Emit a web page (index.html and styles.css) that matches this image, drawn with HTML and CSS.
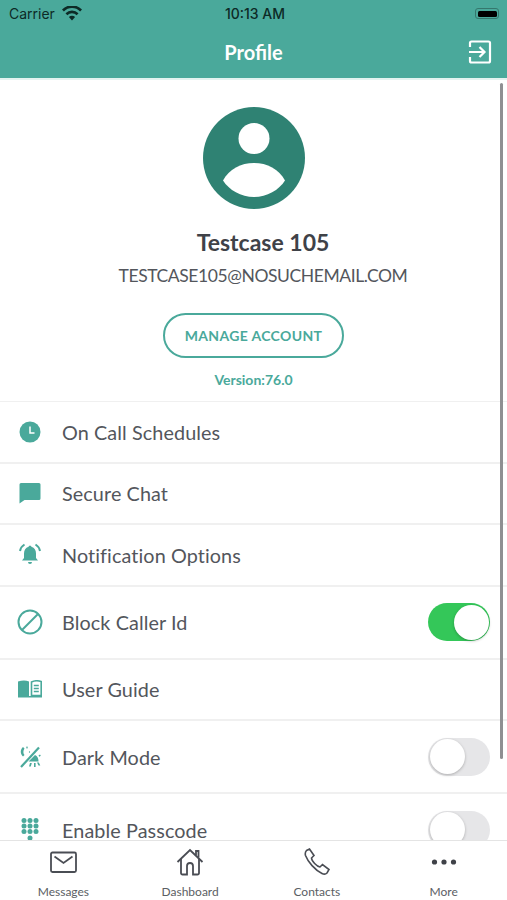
FILE: index.html
```html
<!DOCTYPE html>
<html lang="en">
<head>
    <meta charset="UTF-8">
    <meta name="viewport" content="width=device-width, initial-scale=1.0">
    <title>Profile</title>
    <link rel="stylesheet" href="styles.css">
</head>
<body>
    <div class="app">
        <header class="top">
            <div class="status-bar">
                <div class="carrier">
                    <span>Carrier</span>
                    <svg width="20" height="15" viewBox="0 0 20 15"><path d="M10 14.5 6.9 11a4.4 4.4 0 0 1 6.2 0zM5.3 9.3 3.5 7.3a9.200 9.200 0 0 1 13 0l-1.800 2a6.700 6.700 0 0 0-9.400 0zM1.900 5.500 0 3.500a14 14 0 0 1 20 0l-1.900 2a11.400 11.400 0 0 0-16.200 0z" fill="#0d2a26"/></svg>
                </div>
                <div class="clock">10:13 AM</div>
                <div class="battery"><span class="battery-fill"></span></div>
            </div>
            <div class="nav-bar">
                <h1>Profile</h1>
                <svg class="logout" width="24" height="24" viewBox="0 0 24 24" fill="none" stroke="#fff" stroke-width="2.2"><path d="M2 7V3a1.500 1.500 0 0 1 1.500-1.500h17A1.500 1.500 0 0 1 22 3v18a1.500 1.500 0 0 1-1.500 1.500h-17A1.500 1.500 0 0 1 2 21v-4"/><path d="M1 12h15M11.500 7l5 5-5 5"/></svg>
            </div>
        </header>

        <main class="content">
            <section class="profile">
                <svg class="avatar" width="102" height="102" viewBox="0 0 102 102"><circle cx="51" cy="51" r="51" fill="#2f8273"/><circle cx="51" cy="31.5" r="15.5" fill="#fff"/><path d="M20 73.500C26 62 38 56 51 56s25 6 31 17.500C76 83 64 90 51 90s-25-7-31-16.500z" fill="#fff"/></svg>
                <div class="name">Testcase 105</div>
                <div class="email">TESTCASE105@NOSUCHEMAIL.COM</div>
                <button class="btn-manage">MANAGE ACCOUNT</button>
                <div class="version">Version:76.0</div>
            </section>

            <ul class="menu">
                <li class="menu-item">
                    <div class="menu-icon"><svg width="22" height="22" viewBox="0 0 22 22"><circle cx="11" cy="11" r="10.500" fill="#4aa99b"/><path d="M11 5.500V12h4.500" fill="none" stroke="#fff" stroke-width="1.500"/></svg></div>
                    <span>On Call Schedules</span>
                </li>
                <li class="menu-item">
                    <div class="menu-icon"><svg width="22" height="22" viewBox="0 0 22 22"><path d="M2 1h18a1.500 1.500 0 0 1 1.500 1.500v14a1.500 1.500 0 0 1-1.500 1.500H5.500L.5 21.500V2.500A1.500 1.500 0 0 1 2 1z" fill="#4aa99b"/></svg></div>
                    <span>Secure Chat</span>
                </li>
                <li class="menu-item">
                    <div class="menu-icon"><svg width="24" height="24" viewBox="0 0 24 24"><path d="M12 2.500a2 2 0 0 1 1.500 1.300c3 1 4.500 3.700 4.500 6.700v4.500l2 2.500H4l2-2.500v-4.500c0-3 1.500-5.700 4.500-6.700A2 2 0 0 1 12 2.500zM10 19h4a2 2 0 0 1-4 0z" fill="#4aa99b"/><path d="M6.500 1.500C4 3 2.500 5 2 8M17.500 1.500C20 3 21.500 5 22 8" fill="none" stroke="#4aa99b" stroke-width="2"/></svg></div>
                    <span>Notification Options</span>
                </li>
                <li class="menu-item tall">
                    <div class="menu-icon"><svg width="26" height="26" viewBox="0 0 26 26" fill="none" stroke="#4aa99b" stroke-width="2"><circle cx="13" cy="13" r="11.500"/><path d="M5 21 21 5"/></svg></div>
                    <span>Block Caller Id</span>
                    <div class="switch on"><span class="knob"></span></div>
                </li>
                <li class="menu-item">
                    <div class="menu-icon"><svg width="24" height="18" viewBox="0 0 24 18"><path d="M0 1.500C4 0 8 0 11 1.500v14.500H0z" fill="#4aa99b"/><path d="M0 16h24v1.500H0z" fill="#4aa99b"/><path d="M13.500 2c3-1.500 6.500-1.500 9.700-.5v14H13.500z" fill="none" stroke="#4aa99b" stroke-width="1.600"/><path d="M15.800 5.500h5M15.800 8.500h5M15.800 11.500h5" stroke="#4aa99b" stroke-width="1.300"/></svg></div>
                    <span>User Guide</span>
                </li>
                <li class="menu-item tall">
                    <div class="menu-icon"><svg width="22" height="22" viewBox="0 0 22 22"><path d="M4 1C1 3.500 1 8 4 10.500L5.500 9C4 7.500 4 4.500 5.500 2.500zM8 0l.8 1.500L8 3l-.8-1.500zM10.500 5l.7 1-.7 1-.7-1z" fill="#4aa99b"/><path d="M20 1.500 2 21" stroke="#4aa99b" stroke-width="2.200"/><path d="M16 9c2.500 1 3.500 3.500 3.500 6.500H9.500zM11 17l-1 3.500h1.800l1-3.500zM15 17v4h1.600v-4zM18 16.500l1.500 3h1.800l-1.500-3zM19.500 9.500l1.500-1 .8 1.200-1.500 1z" fill="#4aa99b"/></svg></div>
                    <span>Dark Mode</span>
                    <div class="switch"><span class="knob"></span></div>
                </li>
                <li class="menu-item last">
                    <div class="menu-icon"><svg width="18" height="24" viewBox="0 0 18 24" fill="#4aa99b"><circle cx="3" cy="2.500" r="2.500"/><circle cx="9" cy="2.500" r="2.500"/><circle cx="15" cy="2.500" r="2.500"/><circle cx="3" cy="8" r="2.500"/><circle cx="9" cy="8" r="2.500"/><circle cx="15" cy="8" r="2.500"/><circle cx="3" cy="13.500" r="2.500"/><circle cx="9" cy="13.500" r="2.500"/><circle cx="15" cy="13.500" r="2.500"/><circle cx="9" cy="20" r="2.500"/></svg></div>
                    <span>Enable Passcode</span>
                    <div class="switch"><span class="knob"></span></div>
                </li>
            </ul>
            <div class="scroll-thumb"></div>
        </main>

        <nav class="tabs">
            <div class="tab">
                <svg width="28" height="28" viewBox="0 0 28 28" fill="none" stroke="#4a4d54" stroke-width="1.800"><rect x="2" y="4.500" width="25" height="19.500" rx="1.500"/><path d="M5.500 8.500 14.500 15l9-6.500"/></svg>
                <span>Messages</span>
            </div>
            <div class="tab">
                <svg width="28" height="28" viewBox="0 0 28 28" fill="none" stroke="#4a4d54" stroke-width="1.800"><path d="M1.500 14 14 2l12.500 12"/><path d="M5 11v14a1.500 1.500 0 0 0 1.500 1.500H11V18a3 3 0 0 1 6 0v8.500h4.500A1.500 1.500 0 0 0 23 25V11"/><path d="M20 7V3h2.500v6.500"/></svg>
                <span>Dashboard</span>
            </div>
            <div class="tab">
                <svg width="28" height="28" viewBox="0 0 28 28" fill="none" stroke="#4a4d54" stroke-width="1.600"><path d="M3.500 2.500 6.500 1l4.500 6.500-2.500 2.500c0 3 5.500 8.500 8.500 9l2.500-2.500 6.500 5-2 3.500c-1 1-3 1.500-5 .5C12 22 5 14 2.500 7.500c-.5-2 0-4 1-5z"/></svg>
                <span>Contacts</span>
            </div>
            <div class="tab">
                <svg width="28" height="28" viewBox="0 0 28 28" fill="#3f4248"><circle cx="4.500" cy="14" r="2.600"/><circle cx="14" cy="14" r="2.600"/><circle cx="23.500" cy="14" r="2.600"/></svg>
                <span>More</span>
            </div>
        </nav>
    </div>
</body>
</html>
```

FILE: styles.css
```css
:root {
    --green: #4aa99b;
    --text: #53565c;
    --line: #f0f0f0;
}

html, body {
    margin: 0;
    padding: 0;
}

body {
    font-family: "Lato", "Open Sans", sans-serif;
    color: var(--text);
    background: #fff;
}

.app {
    width: 507px;
    height: 900px;
    display: flex;
    flex-direction: column;
    overflow: hidden;
}

/* header */
.top {
    height: 80px;
    box-sizing: border-box;
    flex: none;
    background: var(--green);
    border-bottom: 2px solid #e3f3f0;
}

.status-bar {
    height: 27px;
    display: grid;
    grid-template-columns: 1fr auto 1fr;
    align-items: center;
    padding: 0 6px 0 9px;
    font-family: "Inter", "Roboto", sans-serif;
    font-size: 14px;
    color: #0d2a26;
}

.carrier {
    display: flex;
    align-items: center;
    gap: 7px;
}

.clock {
    font-weight: 500;
}

.battery {
    justify-self: end;
    width: 24px;
    height: 11px;
    margin-right: 2px;
    padding: 1.500px;
    box-sizing: border-box;
    border: 1px solid #35776d;
    border-radius: 3px;
    display: flex;
}

.battery-fill {
    flex: 1;
    background: #000;
    border-radius: 1.500px;
}

.nav-bar {
    height: 51px;
    padding: 0 15px 2px;
    box-sizing: border-box;
    display: grid;
    grid-template-columns: 1fr auto 1fr;
    align-items: center;
}

.nav-bar h1 {
    grid-column: 2;
    margin: 0;
    font-size: 20px;
    font-weight: 700;
    color: #fff;
}

.logout {
    justify-self: end;
}

/* profile */
.content {
    flex: 1;
    min-height: 0;
    position: relative;
    overflow: hidden;
}

.profile {
    display: flex;
    flex-direction: column;
    align-items: center;
    padding-top: 27px;
    height: 322px;
    box-sizing: border-box;
    border-bottom: 1px solid var(--line);
}

.avatar {
    flex: none;
}

.name {
    margin-top: 19px;
    padding-left: 19px;
    font-size: 23px;
    line-height: 28px;
    font-weight: 700;
    color: #3f4248;
}

.email {
    margin-top: 9px;
    padding-left: 19px;
    font-size: 17.500px;
    line-height: 22px;
    letter-spacing: -0.42px;
}

.btn-manage {
    margin-top: 26px;
    flex: none;
    width: 181px;
    height: 45px;
    padding: 0;
    background: #fff;
    border: 2px solid var(--green);
    border-radius: 23px;
    font-family: inherit;
    font-size: 14px;
    font-weight: 700;
    letter-spacing: 0.35px;
    color: var(--green);
}

.version {
    margin-top: 13px;
    font-size: 14px;
    line-height: 18px;
    font-weight: 700;
    color: var(--green);
}

/* menu */
.menu {
    margin: 0;
    padding: 0;
    list-style: none;
}

.menu-item {
    height: 61.500px;
    box-sizing: border-box;
    display: flex;
    align-items: center;
    padding-right: 17px;
    font-size: 19.800px;
    line-height: 22px;
    letter-spacing: 0.1px;
    border-bottom: 2px solid var(--line);
}

.menu-item.tall {
    height: 73px;
}

/* this row runs under the tab bar, only its top part shows */
.menu-item.last {
    height: 71px;
    border-bottom: 0;
}

.menu-icon {
    width: 60px;
    margin-right: 2px;
    flex: none;
    display: flex;
    justify-content: center;
}

.switch {
    margin-left: auto;
    flex: none;
    width: 62px;
    height: 38px;
    box-sizing: border-box;
    padding: 1.500px;
    border-radius: 19px;
    background: #e6e6e8;
    display: flex;
}

.switch.on {
    background: #34c759;
    justify-content: flex-end;
}

.knob {
    width: 35px;
    height: 35px;
    border-radius: 50%;
    background: #fff;
    box-shadow: 0 1px 3px rgba(0, 0, 0, 0.25);
}

.scroll-thumb {
    position: absolute;
    right: 4px;
    top: 3px;
    width: 3.500px;
    height: 676px;
    border-radius: 2px;
    background: #8f8f92;
}

/* tab bar */
.tabs {
    height: 60px;
    box-sizing: border-box;
    flex: none;
    display: grid;
    grid-template-columns: repeat(4, 1fr);
    background: #fff;
    border-top: 1px solid #e4e4e4;
}

.tab {
    display: flex;
    flex-direction: column;
    align-items: center;
    padding-top: 7px;
    gap: 8px;
    font-size: 12px;
    line-height: 16px;
    color: #5b5e64;
}
```
